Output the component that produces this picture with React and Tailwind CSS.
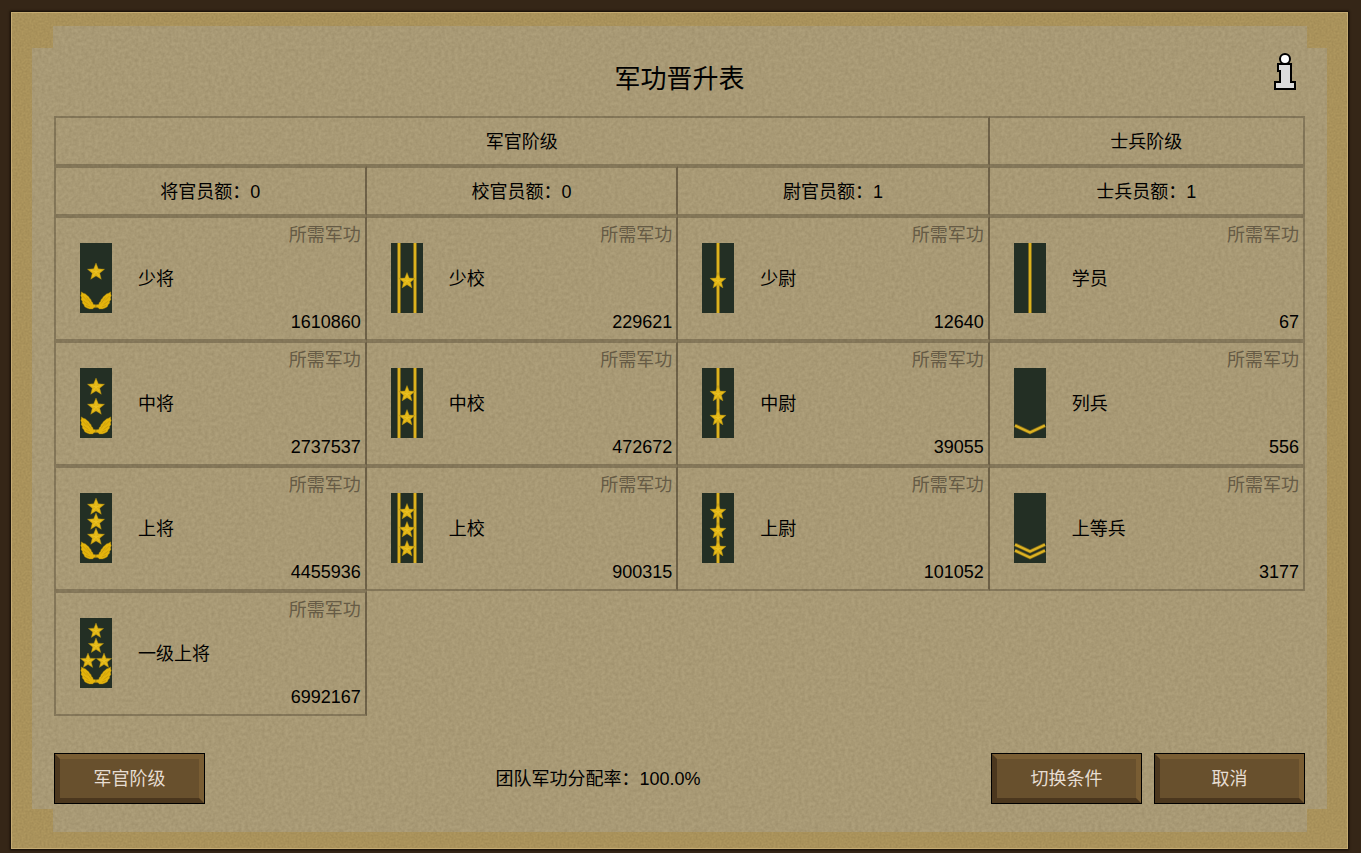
const officerGroups = [
    { title: '将官员额：0', type: 'general' },
    { title: '校官员额：0', type: 'field' },
    { title: '尉官员额：1', type: 'company' },
    { title: '士兵员额：1', type: 'soldier' },
];

const rows = [
    [
        { name: '少将', merit: 1610860, type: 'general', stars: [[16, 29]], size: 9 },
        { name: '少校', merit: 229621, type: 'field', stars: [[16, 38]], size: 8.5 },
        { name: '少尉', merit: 12640, type: 'company', stars: [[16, 38]], size: 8.5 },
        { name: '学员', merit: 67, type: 'cadet' },
    ],
    [
        { name: '中将', merit: 2737537, type: 'general', stars: [[16, 19], [16, 39]], size: 9 },
        { name: '中校', merit: 472672, type: 'field', stars: [[16, 26], [16, 50]], size: 8.5 },
        { name: '中尉', merit: 39055, type: 'company', stars: [[16, 26], [16, 50]], size: 8.5 },
        { name: '列兵', merit: 556, type: 'soldier', chevrons: [57] },
    ],
    [
        { name: '上将', merit: 4455936, type: 'general', stars: [[16, 14], [16, 29], [16, 44]], size: 9 },
        { name: '上校', merit: 900315, type: 'field', stars: [[16, 19], [16, 37], [16, 56]], size: 8.5 },
        { name: '上尉', merit: 101052, type: 'company', stars: [[16, 19], [16, 38], [16, 56]], size: 8.5 },
        { name: '上等兵', merit: 3177, type: 'soldier', chevrons: [51, 57] },
    ],
    [
        { name: '一级上将', merit: 6992167, type: 'general', stars: [[16, 13], [16, 28], [8, 43], [24, 43]], size: 8 },
    ],
];

const starPoints = (cx, cy, r) =>
    Array.from({ length: 10 }, (_, i) => {
        const radius = i % 2 ? r * 0.44 : r;
        const angle = (Math.PI / 5) * i - Math.PI / 2;
        return `${(cx + radius * Math.cos(angle)).toFixed(2)},${(cy + radius * Math.sin(angle)).toFixed(2)}`;
    }).join(' ');

const Star = ({ x, y, r }) => (
    <g>
        <polygon points={starPoints(x, y, r)} fill="#e0b312" stroke="#a88a14" strokeWidth="0.4" />
        {[0, 1, 2, 3, 4].map((i) => {
            const a = ((Math.PI * 2) / 5) * i - Math.PI / 2;
            return (
                <line key={i} x1={x} y1={y} x2={x + r * 0.6 * Math.cos(a)} y2={y + r * 0.6 * Math.sin(a)} stroke="#ecc52a" strokeWidth="0.8" />
            );
        })}
    </g>
);

const Stripe = ({ x }) => (
    <g>
        <rect x={x} y="0" width="4" height="70" fill="#7d6a1c" />
        <rect x={x + 1} y="0" width="2" height="70" fill="#dcb21e" />
    </g>
);

const wing = 'M1.2 48.8 L3.5 50.2 L5.4 50.8 L7.2 52.6 L8.6 53.4 L9.8 55.4 L11 56.4 L11.6 58.4 L12.8 59.4 L13.2 61.2 L16 61.8 V64.6 L14 64.8 L12.6 66 L9.4 66 L6.8 65 L4.6 63.8 L3.8 61.8 L2.2 60 L2.4 58.4 L1 56.4 L1.4 54.6 L0.6 52.4 L1.2 51 Z';

const Wing = () => (
    <g>
        <path d={wing} fill="#e4b40c" stroke="#8a7415" strokeWidth="0.4" strokeLinejoin="round" />
        <path d="M2.6 53 L7 57.5 M3.6 58 L8.5 61.5 M6.5 54.5 L11 60.5 M6 62.5 L10 64" fill="none" stroke="#bd900b" strokeWidth="0.6" />
    </g>
);

const Insignia = ({ rank }) => (
    <svg viewBox="0 0 32 70" className="w-8 h-[70px] shrink-0" aria-hidden="true">
        <rect width="32" height="70" fill="#232f24" />
        {rank.type === 'field' && (
            <>
                <Stripe x={6} />
                <Stripe x={22} />
            </>
        )}
        {(rank.type === 'company' || rank.type === 'cadet') && <Stripe x={14} />}
        {rank.type === 'general' && (
            <>
                <Wing />
                <g transform="matrix(-1 0 0 1 32 0)">
                    <Wing />
                </g>
            </>
        )}
        {rank.stars?.map(([x, y]) => <Star key={`${x}-${y}`} x={x} y={y} r={rank.size} />)}
        {rank.chevrons?.map((y) => (
            <g key={y} fill="none">
                <path d={`M1 ${y + 0.5} L16 ${y + 7.5} L31 ${y + 0.5}`} stroke="#76641b" strokeWidth="3.8" />
                <path d={`M1 ${y + 0.5} L16 ${y + 7.5} L31 ${y + 0.5}`} stroke="#dcb222" strokeWidth="2.4" />
            </g>
        ))}
    </svg>
);

// paper texture, used by the frame and by the sheet inside it
const Grain = ({ id, frequency }) => (
    <svg className="absolute inset-0 w-full h-full pointer-events-none" aria-hidden="true">
        <filter id={id} x="0" y="0" width="100%" height="100%" colorInterpolationFilters="sRGB">
            <feTurbulence type="fractalNoise" baseFrequency={frequency} numOctaves="2" seed="4" />
            <feColorMatrix values="0 0 0 0 0.25  0 0 0 0 0.19  0 0 0 0 0.08  0.22 0 0 0 -0.05" />
        </filter>
        <rect width="100%" height="100%" filter={`url(#${id})`} />
    </svg>
);

const InfoIcon = () => (
    <svg viewBox="0 0 24 38" className="w-6 h-[38px]" aria-hidden="true">
        <path d="M4 12 H17 V30 H21 V37 H1 V30 H6 V19 H4 Z" fill="#dcdcdc" stroke="#000" strokeWidth="2" />
        <circle cx="11" cy="7" r="5" fill="#fff" stroke="#000" strokeWidth="2" />
    </svg>
);

const GameButton = ({ children }) => (
    <button
        type="button"
        className="w-[151px] h-[51px] border-6 border-t-[#795d33] border-r-[#795d33] border-b-[#4b371e] border-l-[#4b371e] bg-[#68502d] outline-1 -outline-offset-1 outline-black text-[#e6ddd2] hover:brightness-110"
    >
        {children}
    </button>
);

const RankCell = ({ rank, first }) => (
    <td className={`h-[125px] p-0 border-y-2 border-r-2 border-y-[#3a302055] border-r-[#3a302088] last:border-r-[#3a302055] ${first ? 'border-l-2 border-l-[#3a302055]' : ''}`}>
        <div className="flex items-center h-[121px] pl-6 pr-1 pb-px">
            <Insignia rank={rank} />
            <span className="ml-[26px] pt-[2px]">{rank.name}</span>
            <div className="flex flex-col justify-between items-end self-stretch ml-auto pt-[3px] pb-[2px] leading-7">
                <span className="text-[#665b45]">所需军功</span>
                <span>{rank.merit}</span>
            </div>
        </div>
    </td>
);

const headCell = 'h-[50px] p-0 pt-[2px] font-normal border-y-2 border-r-2 border-y-[#3a302055] border-r-[#3a302088] last:border-r-[#3a302055]';

const App = () => {
    return (
        <div className="min-h-screen bg-[#352617] pt-3 pl-[11px] pr-[13px] pb-1 text-lg text-black font-['Liberation_Sans','Noto_Sans_CJK_SC',sans-serif]">
            <main className="relative border border-[#c5ab72] bg-[#b0985f] pt-[13px] px-5 pb-4 shadow-[0_0_2px_1px_#120b04]">
                <Grain id="frame-grain" frequency="0.5" />
                <div className="relative bg-[#afa07b] px-[22px] pb-7 [clip-path:polygon(21px_0,calc(100%-20px)_0,calc(100%-20px)_22px,100%_22px,100%_calc(100%-23px),calc(100%-20px)_calc(100%-23px),calc(100%-20px)_100%,21px_100%,21px_calc(100%-23px),0_calc(100%-23px),0_22px,21px_22px)]">
                    <Grain id="sheet-grain" frequency="0.3" />
                    <div className="relative">
                        <header className="grid grid-cols-[1fr_auto_1fr] items-center h-[90px]">
                            <h1 className="col-start-2 mt-4 text-[26px]">军功晋升表</h1>
                            <button type="button" aria-label="说明" className="justify-self-end mr-[7px]">
                                <InfoIcon />
                            </button>
                        </header>

                        <table className="w-full table-fixed border-separate border-spacing-0">
                            <colgroup>
                                <col className="w-[25%]" />
                                <col className="w-[24.9%]" />
                                <col className="w-[24.9%]" />
                                <col />
                            </colgroup>
                            <thead>
                                <tr>
                                    <th colSpan={3} className={`${headCell} border-l-2 border-l-[#3a302055]`}>军官阶级</th>
                                    <th className={headCell}>士兵阶级</th>
                                </tr>
                                <tr>
                                    {officerGroups.map((group, i) => (
                                        <th key={group.type} className={`${headCell} ${i === 0 ? 'border-l-2 border-l-[#3a302055]' : ''}`}>
                                            {group.title}
                                        </th>
                                    ))}
                                </tr>
                            </thead>
                            <tbody>
                                {rows.map((row, i) => (
                                    <tr key={i}>
                                        {row.map((rank, j) => (
                                            <RankCell key={rank.name} rank={rank} first={j === 0} />
                                        ))}
                                        {row.length < 4 && <td colSpan={4 - row.length}></td>}
                                    </tr>
                                ))}
                            </tbody>
                        </table>

                        <footer className="flex items-center gap-3 mt-[37px]">
                            <GameButton>军官阶级</GameButton>
                            <p className="flex-1 text-center">团队军功分配率：100.0%</p>
                            <GameButton>切换条件</GameButton>
                            <GameButton>取消</GameButton>
                        </footer>
                    </div>
                </div>
            </main>
        </div>
    );
};

export default App;
